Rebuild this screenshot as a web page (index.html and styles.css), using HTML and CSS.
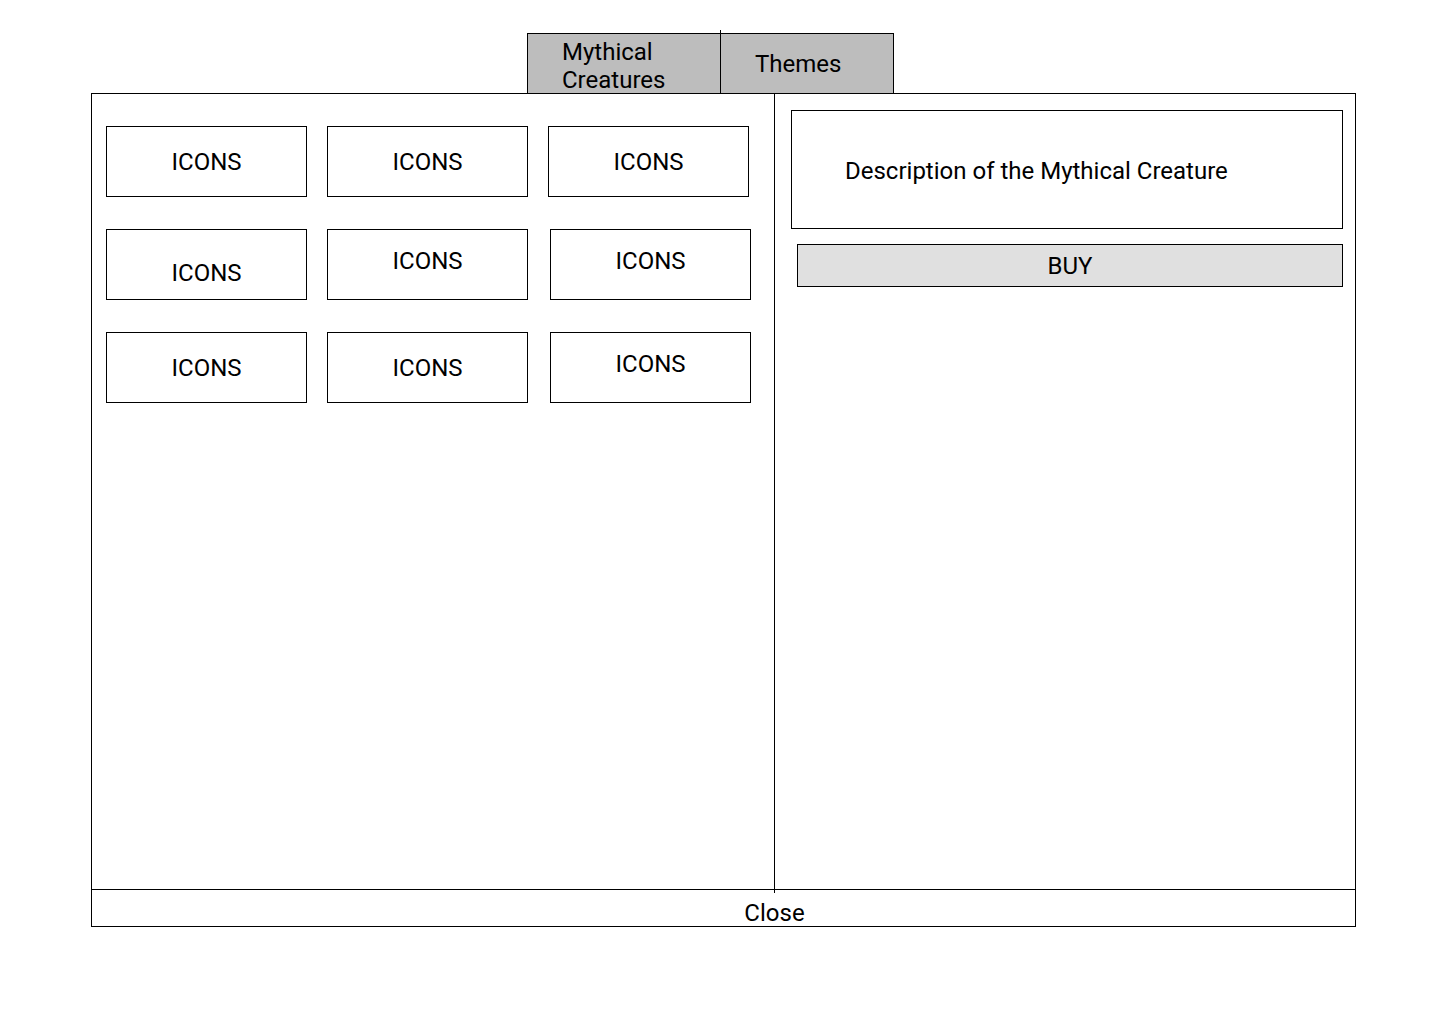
FILE: index.html
```html
<!DOCTYPE html>
<html lang="en">
<head>
<meta charset="utf-8">
<title>Mythical Creatures</title>
<link rel="stylesheet" href="styles.css">
</head>
<body>
<div class="page">
  <div class="tabs">
    <div class="tab tab-first">Mythical<br>Creatures</div>
    <div class="tab tab-second">Themes</div>
  </div>
  <div class="frame">
    <div class="content">
      <div class="left">
        <div class="grid">
          <div class="icon">ICONS</div>
          <div class="icon">ICONS</div>
          <div class="icon">ICONS</div>
          <div class="icon low">ICONS</div>
          <div class="icon high">ICONS</div>
          <div class="icon high shift">ICONS</div>
          <div class="icon">ICONS</div>
          <div class="icon">ICONS</div>
          <div class="icon high shift">ICONS</div>
        </div>
      </div>
      <div class="right">
        <div class="desc">Description of the Mythical Creature</div>
        <div class="buy">BUY</div>
      </div>
    </div>
    <div class="close">Close</div>
  </div>
</div>
</body>
</html>
```

FILE: styles.css
```css
* { box-sizing: border-box; }

html, body {
  margin: 0;
  padding: 0;
  background: #ffffff;
}

body {
  font-family: Roboto, "Liberation Sans", Arial, sans-serif;
  font-size: 24px;
  line-height: 28px;
  color: #000;
}

.page {
  padding-top: 33px;
}

.tabs {
  display: flex;
  margin-left: 527px;
  width: 367px;
  height: 61px;
  border: 1px solid #000;
  background: #bdbdbd;
}

.tab {
  height: 59px;
}

.tab-first {
  position: relative;
  width: 193px;
  border-right: 1px solid #000;
  padding-left: 34px;
  padding-top: 4px;
}

.tab-first::after {
  content: "";
  position: absolute;
  right: -1px;
  top: -4px;
  width: 1px;
  height: 4px;
  background: #000;
}

.tab-second {
  flex: 1;
  display: flex;
  align-items: center;
  padding-left: 34px;
}

.frame {
  margin-left: 91px;
  margin-top: -1px;
  width: 1265px;
  border: 1px solid #000;
}

.content {
  display: flex;
  height: 795px;
}

.left {
  position: relative;
  width: 683px;
  border-right: 1px solid #000;
  padding-top: 32px;
  padding-left: 14px;
}

.left::after {
  content: "";
  position: absolute;
  right: -1px;
  bottom: -4px;
  width: 1px;
  height: 4px;
  background: #000;
}

.grid {
  display: grid;
  grid-template-columns: repeat(3, 201px);
  column-gap: 20px;
  row-gap: 32px;
}

.icon {
  width: 201px;
  height: 71px;
  border: 1px solid #000;
  display: flex;
  align-items: center;
  justify-content: center;
}

.icon.low { padding-top: 16px; }
.icon.high { padding-bottom: 8px; }
.icon.shift { margin-left: 2px; }

.right {
  flex: 1;
  padding-top: 16px;
  padding-left: 16px;
  padding-right: 12px;
}

.desc {
  height: 119px;
  border: 1px solid #000;
  display: flex;
  align-items: center;
  padding-left: 53px;
  padding-top: 2px;
}

.buy {
  margin-top: 15px;
  margin-left: 6px;
  height: 43px;
  border: 1px solid #000;
  background: #e0e0e0;
  display: flex;
  align-items: center;
  justify-content: center;
}

.close {
  height: 37px;
  border-top: 1px solid #000;
  text-align: center;
  padding-top: 9px;
  padding-left: 102px;
}
```
